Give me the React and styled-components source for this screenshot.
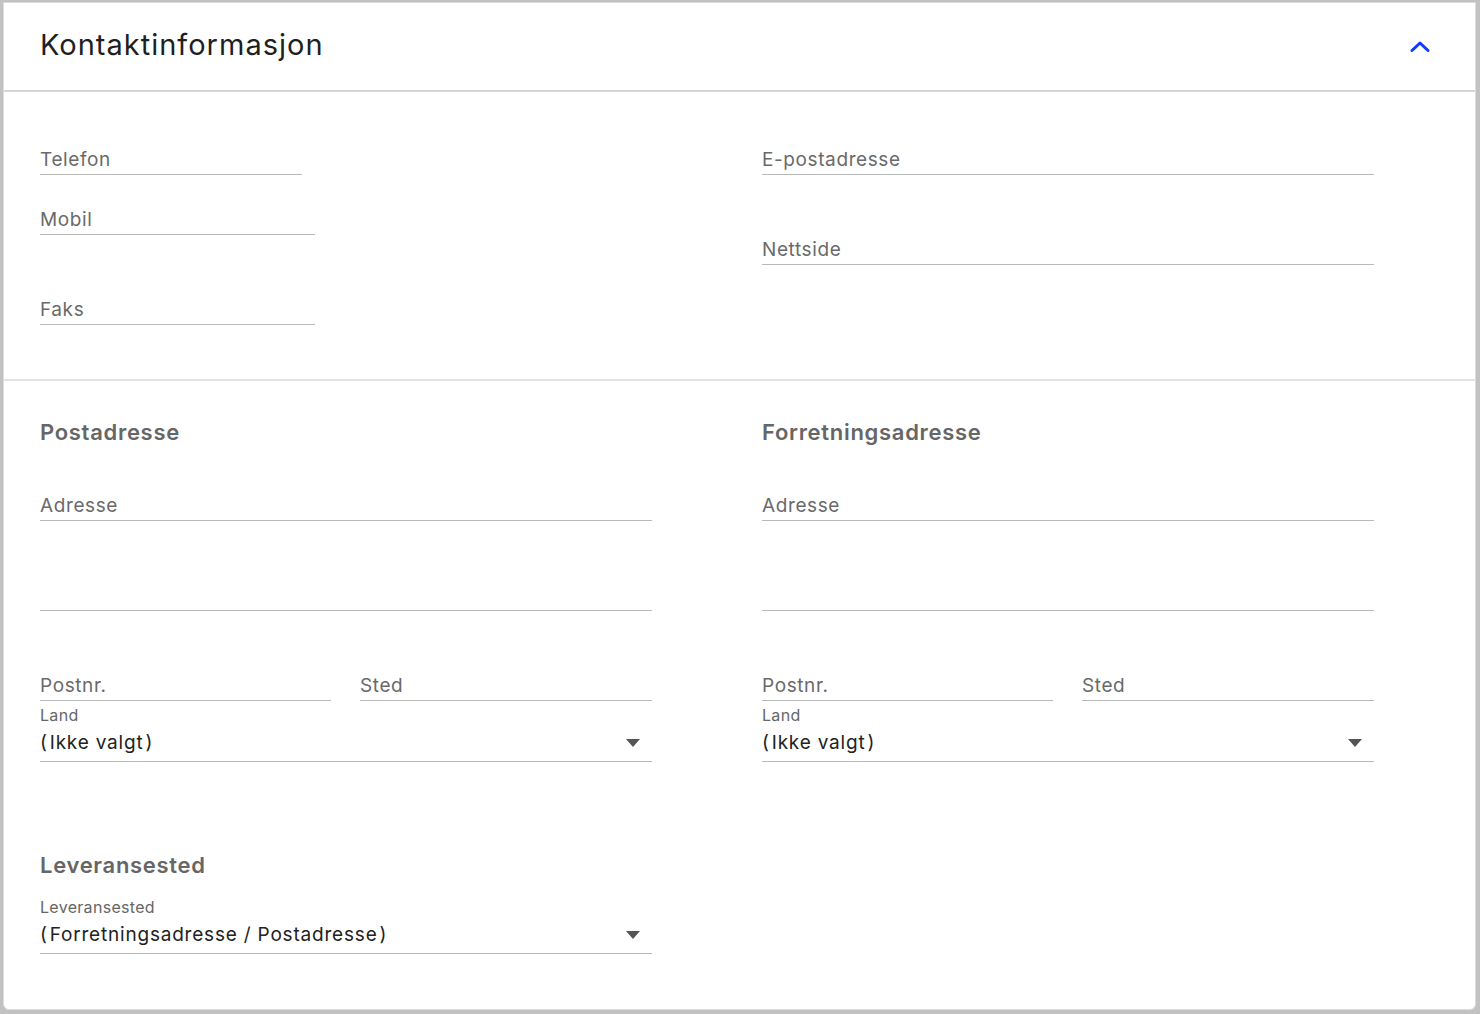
import styled, { createGlobalStyle } from "styled-components"

const Global = createGlobalStyle`
    html, body {
        margin: 0;
        padding: 0;
        background: #c2c2c2;
        font-family: Inter, "Noto Sans", sans-serif;
    }
`
const Frame = styled.div`
    width: 1480px;
    height: 1014px;
    box-sizing: border-box;
    padding: 2px 4px 4px 3px;
`
const Card = styled.div`
    height: 100%;
    box-sizing: border-box;
    background: #fff;
    border: 1px solid #dcdcdc;
    border-radius: 0 0 6px 6px;
    display: flex;
    flex-direction: column;
`
const Header = styled.div`
    height: 87px;
    display: flex;
    align-items: center;
    justify-content: space-between;
    padding: 0 45px 0 36px;
    border-bottom: 2px solid #d6d6d6;
`
const Title = styled.h1`
    margin: 0;
    font-size: 29px;
    font-weight: 400;
    letter-spacing: 1px;
    color: #1f1f1f;
    padding-bottom: 4px;
`
const Section = styled.div`
    display: grid;
    grid-template-columns: 612px 612px;
    column-gap: 110px;
    padding: ${(p) => p.$pad};
    border-bottom: ${(p) => (p.$divider ? "2px solid #e3e3e3" : "none")};
`
const Column = styled.div`
    display: flex;
    flex-direction: column;
`
const Heading = styled.h2`
    margin: 0;
    height: 28px;
    line-height: 28px;
    font-size: 22px;
    font-weight: 600;
    letter-spacing: 0.7px;
    color: #666;
`
const Field = styled.div`
    width: ${(p) => p.$w || "100%"};
    height: 28px;
    box-sizing: border-box;
    margin-top: ${(p) => p.$mt || 0}px;
    border-bottom: 1px solid #b9b9b9;
    font-size: 19px;
    line-height: 26px;
    letter-spacing: 0.6px;
    color: #6a6a6a;
`
const Row = styled.div`
    display: flex;
    justify-content: space-between;
    margin-top: ${(p) => p.$mt || 0}px;
`
const Select = styled.div`
    margin-top: ${(p) => p.$mt || 0}px;
    border-bottom: 1px solid #b9b9b9;
    padding-bottom: 3px;
`
const SmallLabel = styled.div`
    font-size: 16px;
    line-height: 22px;
    letter-spacing: 0.3px;
    color: #666;
    padding-top: 3px;
`
const Value = styled.div`
    display: flex;
    align-items: center;
    justify-content: space-between;
    font-size: 19px;
    line-height: 30px;
    letter-spacing: 0.8px;
    color: #222;
    padding: 2px 12px 0 0;
`
const Paren = styled.span`
    margin: ${(p) => (p.$open ? "0 2px 0 0" : "0 0 0 2px")};
`
const Caret = styled.span`
    width: 0;
    height: 0;
    border-left: 7px solid transparent;
    border-right: 7px solid transparent;
    border-top: 8px solid #555;
`

function Chevron() {
    return (
        <svg width="20" height="14" viewBox="0 0 20 14">
            <path d="M2 10.5 L10 3 L18 10.5" fill="none" stroke="#0a3cff" strokeWidth="3" strokeLinecap="round" strokeLinejoin="round" />
        </svg>
    )
}

function Dropdown({ label, value, mt }) {
    return (
        <Select $mt={mt}>
            <SmallLabel>{label}</SmallLabel>
            <Value>
                <span>
                    <Paren $open>(</Paren>{value}<Paren>)</Paren>
                </span>
                <Caret />
            </Value>
        </Select>
    )
}

function Address({ title }) {
    return (
        <Column>
            <Heading>{title}</Heading>
            <Field $mt={47}>Adresse</Field>
            <Field $mt={62} />
            <Row $mt={62}>
                <Field $w="291px">Postnr.</Field>
                <Field $w="292px">Sted</Field>
            </Row>
            <Dropdown label="Land" value="Ikke valgt" />
        </Column>
    )
}

export default function App() {
    return (
        <>
            <Global />
            <Frame>
                <Card>
                    <Header>
                        <Title>Kontaktinformasjon</Title>
                        <Chevron />
                    </Header>
                    <Section $divider $pad="55px 0 54px 36px">
                        <Column>
                            <Field $w="262px">Telefon</Field>
                            <Field $w="275px" $mt={32}>Mobil</Field>
                            <Field $w="275px" $mt={62}>Faks</Field>
                        </Column>
                        <Column>
                            <Field>E-postadresse</Field>
                            <Field $mt={62}>Nettside</Field>
                        </Column>
                    </Section>
                    <Section $pad="37px 0 0 36px">
                        <Address title="Postadresse" />
                        <Address title="Forretningsadresse" />
                    </Section>
                    <Section $pad="89px 0 0 36px">
                        <Column>
                            <Heading>Leveransested</Heading>
                            <Dropdown label="Leveransested" value="Forretningsadresse / Postadresse" mt={14} />
                        </Column>
                    </Section>
                </Card>
            </Frame>
        </>
    )
}
